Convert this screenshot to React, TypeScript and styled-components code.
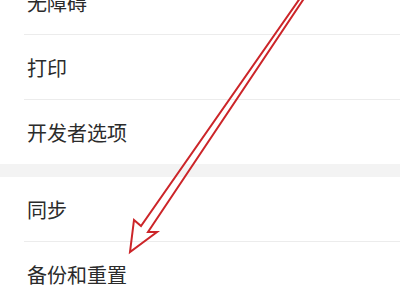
import React from "react";
import styled, { createGlobalStyle } from "styled-components";

const Global = createGlobalStyle`
  html, body { margin: 0; padding: 0; background: #ffffff; }
  body { width: 400px; height: 300px; overflow: hidden; }
`;

const Screen = styled.div`
  position: relative;
  width: 400px;
  height: 300px;
  overflow: hidden;
  background: #ffffff;
  font-family: "Noto Sans CJK SC", "Noto Sans", sans-serif;
`;

const List = styled.div`
  display: flex;
  flex-direction: column;
  margin-top: -30px;
`;

const Group = styled.div`
  display: flex;
  flex-direction: column;
  background: #ffffff;
`;

const GroupGap = styled.div`
  height: 13px;
  background: #f3f3f3;
`;

const Row = styled.div`
  padding-left: 24px;
`;

const RowInner = styled.div<{ $divider: boolean }>`
  height: 64px;
  display: flex;
  align-items: center;
  padding-left: 3px;
  border-bottom: ${(p) => (p.$divider ? "1px solid #ececec" : "none")};
  font-size: 20px;
  color: #2b2b2b;
  letter-spacing: 0;
`;

const Overlay = styled.svg`
  position: absolute;
  left: 0;
  top: 0;
  width: 400px;
  height: 300px;
  pointer-events: none;
`;

const groups: string[][] = [
  ["无障碍", "打印", "开发者选项"],
  ["同步", "备份和重置"],
];

export default function App() {
  return (
    <>
      <Global />
      <Screen>
        <List>
          {groups.map((items, gi) => (
            <React.Fragment key={gi}>
              {gi > 0 && <GroupGap />}
              <Group>
                {items.map((label, i) => (
                  <Row key={label}>
                    <RowInner $divider={i < items.length - 1 || gi === groups.length - 1}>
                      {label}
                    </RowInner>
                  </Row>
                ))}
              </Group>
            </React.Fragment>
          ))}
        </List>
        <Overlay viewBox="0 0 400 300">
          <path
            d="M 303 -6 L 141 226 L 134 220 L 130 252 L 157 232 L 148 232 L 307 -6 Z"
            fill="none"
            stroke="#cc2529"
            strokeWidth="2"
            strokeLinejoin="miter"
          />
        </Overlay>
      </Screen>
    </>
  );
}
